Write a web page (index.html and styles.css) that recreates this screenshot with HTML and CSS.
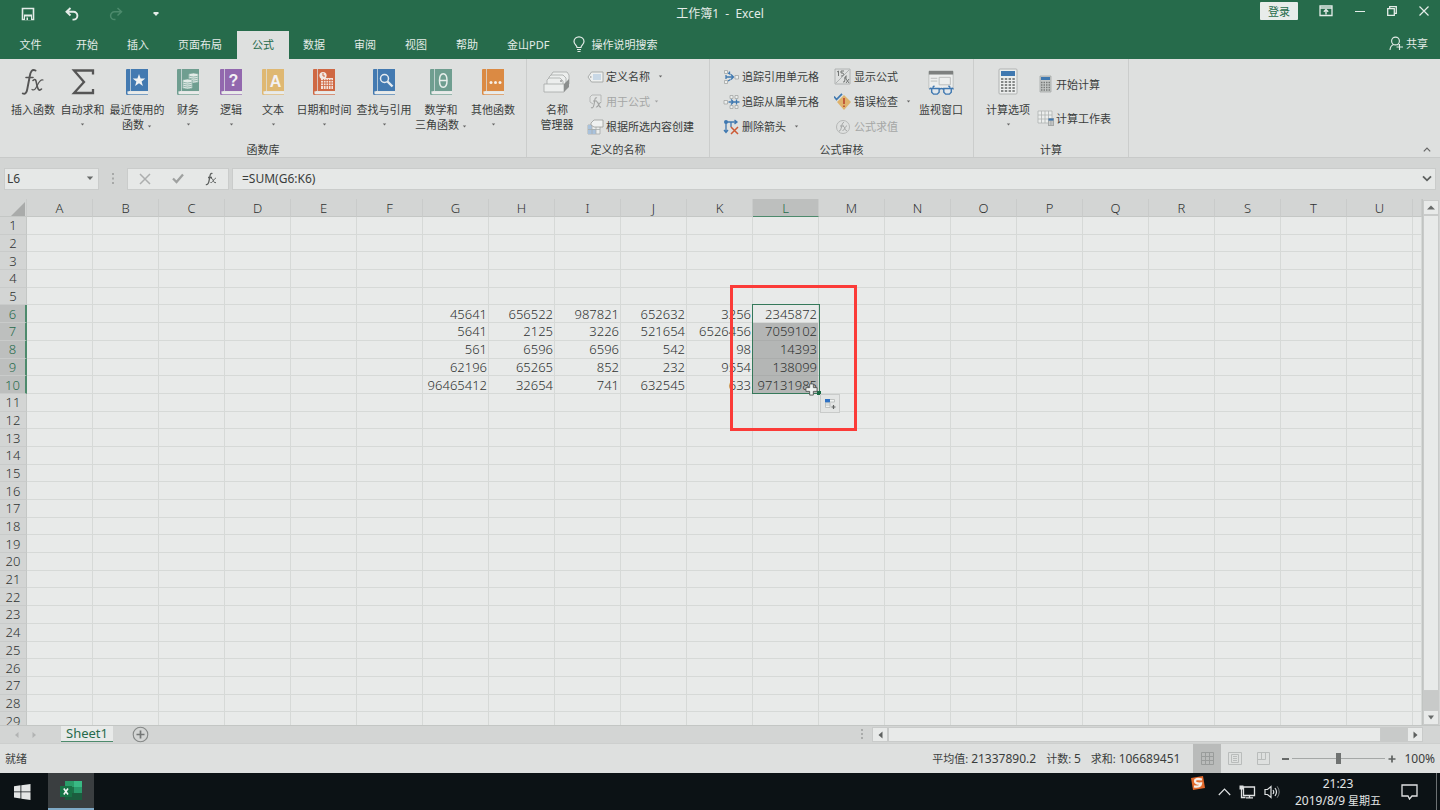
FILE: index.html
```html
<!DOCTYPE html>
<html lang="zh-CN">
<head>
<meta charset="utf-8">
<title>工作簿1 - Excel</title>
<link rel="stylesheet" href="styles.css">
</head>
<body>
<svg class="defs" aria-hidden="true">
  <symbol id="book" viewBox="0 0 24 28">
    <path d="M2 1h21v22H3.500V27H2.500Q1 27 1 25.500V2Q1 1 2 1Z" fill="currentColor"/>
    <path d="M5.500 1v22" stroke="#dfe5e6" stroke-width="1" opacity=".7"/>
    <path d="M2 23.500h21v3H2.500z" fill="#e9ebea"/>
    <path d="M2 26.500h21M2 23.500V26" stroke="currentColor" stroke-width="1" opacity=".65"/>
  </symbol>
  <symbol id="caret" viewBox="0 0 5 3"><path d="M.8 .5h3.400L2.500 2.500z" fill="#666"/></symbol>
</svg>

<header class="top">
  <div class="titlebar">
    <div class="quick">
      <button aria-label="保存"><svg width="14" height="14" viewBox="0 0 14 14"><path d="M1.500 1.500h11v11h-11z" fill="none" stroke="#e4ece8" stroke-width="1.600"/><path d="M3 7.500h8V13H3z" fill="#e4ece8"/><path d="M4 9.500h6V13H4z" fill="#266b4b"/><path d="M5.500 10.500h1.500V13H5.500z" fill="#e4ece8"/></svg></button>
      <button aria-label="撤消"><svg width="14" height="14" viewBox="0 0 14 14"><path d="M5.500 1 1.500 4.800l4 3.700M2 4.800h6.500a3.900 3.900 0 0 1 0 7.800H7.500" fill="none" stroke="#e4ece8" stroke-width="1.900"/></svg></button>
      <button aria-label="恢复"><svg width="14" height="14" viewBox="0 0 14 14"><path d="M8.500 1l4 3.800-4 3.700M12 4.800H5.500a3.900 3.900 0 0 0 0 7.800h1" fill="none" stroke="#4c8a6c" stroke-width="1.500"/></svg></button>
      <button aria-label="自定义快速访问工具栏"><svg width="6" height="6" viewBox="0 0 6 6"><path d="M.5 1h5v1.200L3 5 .5 2.200z" fill="#e4ece8"/></svg></button>
    </div>
    <h1 class="title">工作簿1&nbsp; -&nbsp; Excel</h1>
    <div class="window-tools">
      <button class="login">登录</button>
      <button aria-label="功能区显示选项"><svg width="14" height="12" viewBox="0 0 14 12"><path d="M1 1h12v9.500H1zM1 3h12" fill="none" stroke="#e4ece8" stroke-width="1.300"/><path d="M7 9.500V5M4.800 6.800 7 4.600l2.200 2.200" fill="none" stroke="#e4ece8" stroke-width="1.400"/></svg></button>
      <button aria-label="最小化"><svg width="10" height="12" viewBox="0 0 10 12"><path d="M0 6.500h10" stroke="#e4ece8"/></svg></button>
      <button aria-label="还原"><svg width="10" height="10" viewBox="0 0 10 10"><path d="M.7 2.700h6.600v6.600H.7zM2.700 2.500V.7h6.600v6.600H7.500" fill="none" stroke="#e4ece8" stroke-width="1.300"/></svg></button>
      <button aria-label="关闭"><svg width="10" height="10" viewBox="0 0 10 10"><path d="M.5 .5l9 9M9.500 .5l-9 9" stroke="#e4ece8" stroke-width="1.200"/></svg></button>
    </div>
  </div>
  <nav class="tabs">
    <button class="tab file">文件</button><button class="tab">开始</button><button class="tab">插入</button><button class="tab">页面布局</button><button class="tab active">公式</button><button class="tab">数据</button><button class="tab">审阅</button><button class="tab">视图</button><button class="tab">帮助</button><button class="tab">金山PDF</button>
    <button class="tell"><svg width="12" height="17" viewBox="0 0 12 17"><path d="M4 11.500C4 9 1 8.500 1 5.500a5 4.700 0 0 1 10 0C11 8.500 8 9 8 11.500zM4 13.500h4M4.500 15.500h3" fill="none" stroke="#e4ece8" stroke-width="1.200"/></svg>操作说明搜索</button>
    <button class="share"><svg width="14" height="15" viewBox="0 0 14 15"><circle cx="6.500" cy="5" r="3.900" fill="none" stroke="#e4ece8" stroke-width="1.100"/><path d="M1 14c.2-3 1.700-4.800 3.500-5.500M8.500 8.500l1 .6M10.500 8v6M7.500 11h6.500" fill="none" stroke="#e4ece8" stroke-width="1.100"/></svg>共享</button>
  </nav>
</header>

<section class="ribbon">
  <div class="group library">
    <div class="tools">
      <button class="big w48"><svg width="24" height="28" viewBox="0 0 24 28"><g fill="none" stroke="#555" stroke-linecap="round"><path d="M14.500 2.500C11 .5 9.500 4 8.800 8L6.300 21c-.6 4-2.300 5.500-4.500 4.500" stroke-width="1.900"/><path d="M5 9.500h7M12 12.500c3-3 3 1 4 5s2 6 4.500 3.500" stroke-width="1.600"/><path d="M22 12c-3-1-5 4-6 6s-2.500 5-5 3.500" stroke-width="1.200"/></g></svg><span>插入函数</span></button>
      <button class="big w51"><svg width="24" height="28" viewBox="0 0 24 28"><path d="M22 6.500V2.500H3l10 11.500L3 25h19v-4" fill="none" stroke="#555" stroke-width="2.300"/></svg><span>自动求和</span><i><svg class="caret"><use href="#caret"/></svg></i></button>
      <button class="big w58"><svg class="blue" width="24" height="28" viewBox="0 0 24 28"><use href="#book"/><path d="m14 6 1.600 4.400 4.700.1-3.700 2.900 1.300 4.600-3.900-2.700-3.900 2.700 1.300-4.600-3.700-2.900 4.700-.1z" fill="#f1f3f3"/></svg><span>最近使用的<br>函数 <svg class="caret"><use href="#caret"/></svg></span></button>
      <button class="big w44"><svg class="teal" width="24" height="28" viewBox="0 0 24 28"><use href="#book"/><g fill="#e3ebe7" stroke="#6f9e90" stroke-width=".7"><ellipse cx="17.500" cy="13" rx="5" ry="2"/><ellipse cx="17.500" cy="11" rx="5" ry="2"/><ellipse cx="17.500" cy="9" rx="5" ry="2"/><ellipse cx="17.500" cy="7" rx="5" ry="2"/><ellipse cx="11.500" cy="19" rx="5" ry="2"/><ellipse cx="11.500" cy="17" rx="5" ry="2"/><ellipse cx="11.500" cy="15" rx="5" ry="2"/><ellipse cx="11.500" cy="13" rx="5" ry="2"/></g></svg><span>财务</span><i><svg class="caret"><use href="#caret"/></svg></i></button>
      <button class="big w42"><svg class="purple" width="24" height="28" viewBox="0 0 24 28"><use href="#book"/><text x="14.500" y="18" class="glyph">?</text></svg><span>逻辑</span><i><svg class="caret"><use href="#caret"/></svg></i></button>
      <button class="big w42"><svg class="yellow" width="24" height="28" viewBox="0 0 24 28"><use href="#book"/><text x="14.500" y="19" class="glyph">A</text></svg><span>文本</span><i><svg class="caret"><use href="#caret"/></svg></i></button>
      <button class="big w60"><svg class="red" width="24" height="28" viewBox="0 0 24 28"><use href="#book"/><path d="M9 10h12v11H9z" fill="#f3e2db"/><path d="M9 12.500h12M9 15h12M9 17.500h12M11.500 11v10M14 11v10M16.500 11v10M19 11v10" stroke="#cf6843" stroke-width=".8"/><circle cx="11" cy="7.500" r="3.600" fill="#f1e9e5"/><path d="M11 5v3h2" fill="none" stroke="#cf6843"/></svg><span>日期和时间</span><i><svg class="caret"><use href="#caret"/></svg></i></button>
      <button class="big w60"><svg class="blue" width="24" height="28" viewBox="0 0 24 28"><use href="#book"/><circle cx="12.500" cy="10.500" r="4" fill="none" stroke="#e5ebf0" stroke-width="1.500"/><path d="m15.500 13.500 5 5" stroke="#e5ebf0" stroke-width="2.400"/></svg><span>查找与引用</span><i><svg class="caret"><use href="#caret"/></svg></i></button>
      <button class="big w54"><svg class="teal" width="24" height="28" viewBox="0 0 24 28"><use href="#book"/><path d="M10.500 12.500c0-9 7.500-9 7.500 0s-7.500 9-7.500 0zh7.500" fill="none" stroke="#e9efec" stroke-width="1.500"/></svg><span>数学和<br>三角函数 <svg class="caret"><use href="#caret"/></svg></span></button>
      <button class="big w50"><svg class="orange" width="24" height="28" viewBox="0 0 24 28"><use href="#book"/><g fill="#f7efe6"><circle cx="10" cy="14.500" r="1.500"/><circle cx="14.500" cy="14.500" r="1.500"/><circle cx="19" cy="14.500" r="1.500"/></g></svg><span>其他函数</span><i><svg class="caret"><use href="#caret"/></svg></i></button>
    </div>
    <h2>函数库</h2>
  </div>

  <div class="group names">
    <div class="tools">
      <button class="big w60"><svg width="28" height="28" viewBox="0 0 28 28"><g fill="#eceeed" stroke="#a4a7a6" stroke-width=".8"><path d="M8 17V7l2-3h14l2 3v9z"/><path d="M6 18V9l2-2h12l3 3v8z"/><path d="M4 19v-7l2-2h11l3 3v6z"/><path d="M1 16h20v8H1z"/></g><path d="m21 16 5-5v8l-5 5z" fill="#8b8e8d"/><circle cx="18" cy="13" r="1" fill="#999"/></svg><span>名称<br>管理器</span></button>
      <div class="rows">
        <button><svg width="17" height="16" viewBox="0 0 17 16"><path d="M1 8l3.500-5H16v10H4.500z" fill="#eef0ef" stroke="#a2a5a4" stroke-width=".9"/><path d="M6 6h8M6 8h8M6 10h8" stroke="#a3c0dc"/><circle cx="3.800" cy="8" r=".7" fill="#888"/></svg>定义名称 <svg class="caret far"><use href="#caret"/></svg></button>
        <button class="off"><svg width="17" height="16" viewBox="0 0 17 16"><path d="M3 8V3l2-2h9v6M3 8l3 2" fill="#e2e4e3" stroke="#b5b7b6"/><path d="M10 4C8 3 8 5 7.500 8S6.500 15 4 13.500M6 7h4M9.500 8c2-1 2 6 4.500 5M14.500 8c-2-1-3 6-5.500 5" fill="none" stroke="#a1a3a2" stroke-width="1.100"/></svg>用于公式 <svg class="caret"><use href="#caret"/></svg></button>
        <button><svg width="17" height="16" viewBox="0 0 17 16"><path d="M1 6h12v9H1z" fill="#eceeed" stroke="#a5a8a7" stroke-width=".8"/><path d="M1 10h8v5H1zM5 6v4H1V6z" fill="#a9c2dc"/><path d="M1 10.500h12M5 6v9M9 6v9" stroke="#aaadac" stroke-width=".8"/><path d="m4 4 3-3h9v7H7L4 6z" fill="#f0f2f1" stroke="#999c9b" stroke-width=".8"/></svg>根据所选内容创建</button>
      </div>
    </div>
    <h2>定义的名称</h2>
  </div>

  <div class="group audit">
    <div class="tools">
      <div class="rows trace">
        <button><svg width="17" height="16" viewBox="0 0 17 16"><path d="M1.500 1.500h3v3h-3zM1.500 11.500h3v3h-3zM12 6.500h3.500v3.500H12z" fill="#eceeed" stroke="#a3a6a5" stroke-width=".8"/><path d="M3 8h7M8 5.500 10.500 8 8 10.500M3 6v4M6.500 2.500v3M5 4l2.500 1.500M5 12l2.500-1.500" fill="none" stroke="#3f78b0" stroke-width="1.300"/></svg>追踪引用单元格</button>
        <button><svg width="17" height="16" viewBox="0 0 17 16"><path d="M1 6.500h3.500V10H1zM7 1.500h3v3H7zM7 11.500h3v3H7zM12 1.500h3v3h-3zM12 11.500h3v3h-3z" fill="#eceeed" stroke="#a3a6a5" stroke-width=".8"/><path d="M5.500 8H10M8 5.500 10.500 8 8 10.500M13.500 5.500v5M11 8h5.500" fill="none" stroke="#3f78b0" stroke-width="1.300"/></svg>追踪从属单元格</button>
        <button><svg width="17" height="16" viewBox="0 0 17 16"><path d="M3 3v10M3 3h11M1 11l2 2.500L5 11M11.500 1 14 3l-2.500 2M8 3v5" fill="none" stroke="#3f78b0" stroke-width="1.300"/><circle cx="3" cy="3" r="2" fill="#3f78b0"/><path d="m8 8 7 7M15 8l-7 7" stroke="#cc5a36" stroke-width="1.500"/></svg>删除箭头 <svg class="caret far"><use href="#caret"/></svg></button>
      </div>
      <div class="rows check">
        <button><svg width="18" height="17" viewBox="0 0 18 17"><path d="M1 1h15v15H1zM2 15 15 2" fill="none" stroke="#a5a8a7" stroke-width=".8"/><path d="M3 4l1.500-1v5M10 3H7v2h2q1.500 1.500-.5 3H7M13 8q-2-1-2 3t-2 3M10 10h3M12 11l3 4M15 11l-3 4" fill="none" stroke="#686b6a" stroke-width=".9"/></svg>显示公式</button>
        <button><svg width="18" height="18" viewBox="0 0 18 18"><path d="m10 2 7 7-7 8-7-8z" fill="#dfb36c"/><path d="M10 5v6M10 12.500v1.500" stroke="#bd4c32" stroke-width="1.700"/><path d="m0 3.500 2.500 3L8 .8" fill="none" stroke="#3f78b0" stroke-width="1.700"/></svg>错误检查 <svg class="caret far"><use href="#caret"/></svg></button>
        <button class="off"><svg width="18" height="16" viewBox="0 0 18 16"><circle cx="9" cy="8" r="6.500" fill="none" stroke="#b5b7b6"/><path d="M10 3.500C7 3 8 12.500 5 12M6 7h4M9 7.500c2-1 1.500 5 4 4M13 7c-2-.5-2.500 5-4.500 4.500" fill="none" stroke="#a2a4a3"/></svg>公式求值</button>
      </div>
      <button class="big w50"><svg width="28" height="30" viewBox="0 0 28 30"><path d="M1 4h26v18H1z" fill="#eceeed" stroke="#b3b6b5" stroke-width=".8"/><path d="M1 3h26v4H1z" fill="#7d807f"/><path d="M3 11h7M3 14h7M12 10h12v8H12z" fill="none" stroke="#b8bbba"/><path d="M4 22h8v4l-2 2H6l-2-2zM17 22h8v4l-2 2h-4l-2-2zM12 23q2.500-2 5 0M4 22q-2-1-2 1M25 22q2-1 2 1M5 21l2-2M24 21l-2-2" fill="#e2e7eb" stroke="#3f78b0" stroke-width="1.500"/></svg><span>监视窗口</span></button>
    </div>
    <h2>公式审核</h2>
  </div>

  <div class="group calc">
    <div class="tools">
      <button class="big w50"><svg width="20" height="28" viewBox="0 0 20 28"><rect x="1" y="1" width="18" height="25" rx="1" fill="#eceeed" stroke="#b0b3b2"/><path d="M3 3h14v5H3z" fill="#3f78b0"/><g stroke="#626564" stroke-width="1.600" stroke-dasharray="2.400 1.400"><path d="M3 11h14M3 14h14M3 17h14M3 20h14M3 23h14"/></g></svg><span>计算选项</span><i><svg class="caret"><use href="#caret"/></svg></i></button>
      <div class="rows two">
        <button><svg width="17" height="18" viewBox="0 0 17 18"><path d="M3 1h11v16H3z" fill="#c5c8c7" stroke="#a5a8a7" stroke-width=".8"/><path d="M4 2h9v3H4z" fill="#3f78b0"/><g stroke="#777a79" stroke-width="1.300" stroke-dasharray="1.500 1"><path d="M4 7.500h9M4 10h9M4 12.500h9M4 15h9"/></g></svg>开始计算</button>
        <button><svg width="17" height="16" viewBox="0 0 17 16"><path d="M1 1h14v12H1zM1 5h14M1 9h14M4.500 1v12M8 1v12M11.500 1v12" fill="#eceeed" stroke="#afb2b1" stroke-width=".8"/><path d="M11 8h6v8h-6z" fill="#a5a8a7"/><path d="M11.500 8.500h5v2h-5z" fill="#3f78b0"/><path d="M12 12h4M12 14h4" stroke="#eceeed" stroke-dasharray="1 .6"/></svg>计算工作表</button>
      </div>
    </div>
    <h2>计算</h2>
  </div>
  <button class="collapse" aria-label="折叠功能区"><svg width="8" height="5" viewBox="0 0 8 5"><path d="M.8 4.300 4 1l3.200 3.300" fill="none" stroke="#666" stroke-width="1.200"/></svg></button>
</section>

<section class="formula-bar">
  <div class="name-box"><input type="text" value="L6" aria-label="名称框"><svg width="8" height="5" viewBox="0 0 8 5"><path d="M.8 .5h6.400L4 4z" fill="#686b6a"/></svg></div>
  <svg width="4" height="13" viewBox="0 0 4 13"><path d="M1 1h2v2H1zM1 5.500h2v2H1zM1 10h2v2H1z" fill="#a7a9a8"/></svg>
  <div class="fx-buttons">
    <button aria-label="取消"><svg width="12" height="12" viewBox="0 0 12 12"><path d="m1 1 10 10M11 1 1 11" stroke="#acaeae" stroke-width="1.500"/></svg></button>
    <button aria-label="输入"><svg width="12" height="11" viewBox="0 0 12 11"><path d="m1 5.500 3.500 3.500L11 1.500" fill="none" stroke="#9fa1a0" stroke-width="2.300"/></svg></button>
    <button aria-label="插入函数"><svg width="12" height="14" viewBox="0 0 12 14"><path d="M7.500 1.500C5 .5 5 4 4.500 6.500S3.500 13.500.8 12.500M3 5.500h4" fill="none" stroke="#5d605f" stroke-width="1.300"/><path d="M6 6.500c2.500-1 2 5.500 5 4M11 6.300c-2-.5-3 5-5.500 4.200" fill="none" stroke="#5d605f"/></svg></button>
  </div>
  <div class="formula"><input type="text" value="=SUM(G6:K6)" aria-label="编辑栏"><svg width="10" height="7" viewBox="0 0 10 7"><path d="m1 1.300 4 4 4-4" fill="none" stroke="#5d605f" stroke-width="1.800"/></svg></div>
</section>

<main class="workspace">
  <div class="sheet">
    <table>
      <colgroup id="cols"></colgroup>
      <thead id="head"></thead>
      <tbody id="cells"></tbody>
    </table>
    <div class="selection"></div>
    <svg class="pointer" viewBox="0 0 14 14"><path d="M5 1h4v4h4v4H9v4H5V9H1V5h4z" fill="#f0f2f1" stroke="#4a4d4c" stroke-width=".9"/></svg>
    <button class="fill-options" aria-label="自动填充选项"><svg width="12" height="12" viewBox="0 0 12 12"><path d="M1 1h5v3.500H1z" fill="#2f72c4"/><path d="M6 1.500h4.500V4H6M1.500 5H6v4.500H1.500zM1.500 7H6" fill="#f1f3f2" stroke="#b4b7b6" stroke-width=".8"/><path d="M9.500 7v4M7.500 9h4" stroke="#626564" stroke-width="1.200"/></svg></button>
    <div class="highlight"></div>
  </div>
  <div class="vscroll">
    <button aria-label="向上滚动"><svg width="8" height="5" viewBox="0 0 8 5"><path d="M0 4.500h8L4 .5z" fill="#686b6a"/></svg></button>
    <div class="thumb"></div><div class="track"></div>
    <button aria-label="向下滚动"><svg width="8" height="5" viewBox="0 0 8 5"><path d="M1 .5h6L4 4.500z" fill="#686b6a"/></svg></button>
  </div>
</main>

<div class="sheet-tabs">
  <button class="nav" aria-label="上一张"><svg width="5" height="8" viewBox="0 0 5 8"><path d="M4.500 1v6L1 4z" fill="#b2b4b3"/></svg></button>
  <button class="nav" aria-label="下一张"><svg width="5" height="8" viewBox="0 0 5 8"><path d="M.5 1v6L4 4z" fill="#b2b4b3"/></svg></button>
  <button class="sheet-name">Sheet1</button>
  <button class="add" aria-label="新工作表"><svg width="17" height="17" viewBox="0 0 17 17"><circle cx="8.500" cy="8.500" r="7.300" fill="none" stroke="#858887" stroke-width="1.100"/><path d="M8.500 4.500v8M4.500 8.500h8" stroke="#747776" stroke-width="1.700"/></svg></button>
  <div class="hscroll">
    <svg width="4" height="11" viewBox="0 0 4 11"><path d="M1 0h2v2H1zM1 4h2v2H1zM1 8h2v2H1z" fill="#aaacab"/></svg>
    <button aria-label="向左滚动"><svg width="5" height="8" viewBox="0 0 5 8"><path d="M4.500 .5v7L.5 4z" fill="#5d605f"/></svg></button>
    <div class="thumb"></div><div class="track"></div>
    <button aria-label="向右滚动"><svg width="5" height="8" viewBox="0 0 5 8"><path d="M.5 .5v7l4-3.500z" fill="#5d605f"/></svg></button>
  </div>
</div>

<footer class="status">
  <span class="ready">就绪</span>
  <div class="stats"><span>平均值: <b>21337890.2</b></span><span>计数: <b>5</b></span><span>求和: <b>106689451</b></span></div>
  <button class="view on" aria-label="普通"><svg width="13" height="13" viewBox="0 0 13 13"><path d="M.5 .5h12v12H.5zM4.500 .5v12M8.500 .5v12M.5 4.500h12M.5 8.500h12" fill="none" stroke="#999c9b"/></svg></button>
  <button class="view" aria-label="页面布局"><svg width="14" height="13" viewBox="0 0 14 13"><path d="M.5 .5h13v12H.5zM3.500 2.500h7v8h-7zM5 4.500h4M5 6.500h4M5 8.500h4" fill="none" stroke="#b9bcbb"/></svg></button>
  <button class="view" aria-label="分页预览"><svg width="13" height="13" viewBox="0 0 13 13"><path d="M.5 .5h12v12H.5zM.5 7.500h8v-7M4.500 .5v7" fill="none" stroke="#b9bcbb"/></svg></button>
  <div class="zoom">
    <button aria-label="缩小"><svg width="7" height="8" viewBox="0 0 7 8"><path d="M0 4h7" stroke="#5f6261" stroke-width="1.900"/></svg></button>
    <input type="range" min="0" max="100" value="50" aria-label="显示比例">
    <button aria-label="放大"><svg width="8" height="8" viewBox="0 0 8 8"><path d="M.5 4h7M4 .5v7" stroke="#5f6261" stroke-width="1.700"/></svg></button>
    <span>100%</span>
  </div>
</footer>

<div class="taskbar">
  <button class="start" aria-label="开始"><svg width="17" height="16" viewBox="0 0 17 16"><path d="M0 2.300 6.500 1.300v6.200H0zM7.300 1.200 16.500 0v7.500H7.300zM0 8.300h6.500v6.200L0 13.600zM7.300 8.300h9.200V16l-9.200-1.300z" fill="#e3e5e5"/></svg></button>
  <button class="app" aria-label="Excel"><svg width="23" height="21" viewBox="0 0 23 21"><path d="M5 1h9v6H5z" fill="#2a9d69"/><path d="M14 1h8v6h-8z" fill="#39b984"/><path d="M5 7h9v6H5z" fill="#1d7048"/><path d="M14 7h8v6h-8z" fill="#29996a"/><path d="M5 13h17v7H5z" fill="#1b5d3e"/><path d="M0 6h12v11H0z" fill="#177245"/><path d="m3.800 8.500 4.200 6M8 8.500l-4.200 6" stroke="#f1f5f3" stroke-width="1.600"/></svg></button>
  <div class="tray">
    <svg class="ime" width="16" height="16" viewBox="0 0 16 16"><path d="M1 3 13 1l2 12-12 2z" fill="#e36a2c"/><path d="M12 4.500Q5 3 5 6t6 2.500Q10.500 12.500 4 11.300" fill="none" stroke="#f6efea" stroke-width="2.300"/></svg>
    <svg width="13" height="8" viewBox="0 0 13 8"><path d="m.8 7 5.700-5.800L12.200 7" fill="none" stroke="#dfe1e2" stroke-width="1.200"/></svg>
    <svg width="17" height="14" viewBox="0 0 17 14"><path d="M4.500 2h11v8.500h-11zM7 12.800h7M10.500 10.500v2M2.500 4v8.500h4" fill="none" stroke="#dfe1e2" stroke-width="1.300"/><path d="M.5 .5h4v4h-4z" fill="#dfe1e2"/></svg>
    <svg width="16" height="14" viewBox="0 0 16 14"><path d="M1 4.500h2.500L7 1.500v11L3.500 9.500H1zM9 5q1.500 2 0 4M11 3q3 4 0 8" fill="none" stroke="#dfe1e2" stroke-width="1.200"/><path d="M13.200 1.300q4 5.700 0 11.400" fill="none" stroke="#7c8082"/></svg>
    <div class="clock"><time>21:23</time><span><b>2019/8/9</b> 星期五</span></div>
    <svg width="17" height="16" viewBox="0 0 17 16"><path d="M1 1h15v11h-5l-2.500 3L7 12H1z" fill="none" stroke="#dfe1e2" stroke-width="1.300"/></svg>
    <span class="desktop"></span>
  </div>
</div>
<script src="sheet.js"></script>
</body>
</html>
```

FILE: styles.css
```css
* { box-sizing: border-box; }
html, body { height: 100%; margin: 0; }
body {
  display: flex;
  flex-direction: column;
  overflow: hidden;
  background: #d3d5d4;
  color: #3a3d3c;
  font: 11px/15px "Noto Sans", "Noto Sans CJK SC", sans-serif;
}
button, input {
  margin: 0;
  padding: 0;
  border: 0;
  background: none;
  color: inherit;
  font: inherit;
}
svg { display: block; flex: none; }
h1, h2 { margin: 0; font: inherit; }
b { font-weight: 400; font-size: 12px; }
.defs { position: absolute; width: 0; height: 0; }

/* title bar and tabs */
.top { background: #266b4b; color: #e4ece8; }
.titlebar {
  display: grid;
  grid-template-columns: 1fr auto 1fr;
  align-items: center;
  height: 27px;
}
.quick { display: flex; align-items: center; gap: 30px; padding-left: 21px; }
.quick button { display: flex; width: 14px; justify-content: center; }
.quick button:last-child { width: 6px; }
.title { font-size: 12px; }
.window-tools {
  display: flex;
  justify-content: flex-end;
  align-items: center;
  gap: 22px;
  height: 22px;
  padding-right: 11px;
  align-self: start;
}
.login {
  width: 38px;
  height: 18px;
  margin-right: -1px;
  border-radius: 1px;
  background: #e8ecea;
  color: #266b4b;
}
.tabs { display: flex; align-items: stretch; height: 32px; padding-top: 4px; }
.tab { padding: 0 15px 2px 14px; }
.tab.file { width: 62px; }
.tab.active { padding: 0 15px 2px; background: #dee0df; color: #266b4b; }
.tell { display: flex; align-items: center; gap: 6px; padding: 0 0 1px 9px; }
.share { display: flex; align-items: center; gap: 3px; margin-left: auto; padding: 0 12px 4px 0; }

/* ribbon */
.ribbon {
  position: relative;
  display: flex;
  height: 99px;
  background: #dee0df;
  border-bottom: 1px solid #c8cac9;
}
.group { display: flex; flex-direction: column; border-right: 1px solid #cbcdcc; }
.group h2 { text-align: center; }
.tools { display: flex; height: 84px; }
.big {
  display: flex;
  flex-direction: column;
  align-items: center;
  padding-top: 9px;
  white-space: nowrap;
}
.big > svg { height: 28px; margin-bottom: 6px; }
.big span { text-align: center; }
.big i { display: flex; height: 15px; align-items: center; }
.caret { display: inline-block; width: 5px; height: 3px; vertical-align: middle; }
.w42 { width: 42px; }
.w44 { width: 44px; }
.w48 { width: 48px; }
.w50 { width: 50px; }
.w51 { width: 51px; }
.w54 { width: 54px; }
.w58 { width: 58px; }
.w60 { width: 60px; }
.blue { color: #437ab1; }
.teal { color: #6f9e90; }
.purple { color: #9268ae; }
.yellow { color: #dfb872; }
.red { color: #cf6843; }
.orange { color: #db8a43; }
.glyph {
  fill: #f3f1f4;
  font: 700 16px "Liberation Sans", sans-serif;
  text-anchor: middle;
}
.rows { display: flex; flex-direction: column; padding-top: 5px; }
.rows button {
  display: flex;
  align-items: center;
  gap: 2px;
  height: 25px;
  white-space: nowrap;
}
.rows .caret { margin-left: 2px; }
.rows .caret.far { margin-left: 6px; }
.rows.two { padding: 8px 0 0 4px; }
.rows.two button { height: 34px; }
.rows .off { color: #a5a7a6; }
.off .caret { opacity: .5; }
.library .tools { padding: 0 8px 0 9px; }
.names .tools { padding-right: 15px; }
.audit .tools { padding: 0 7px 0 13px; }
.trace { width: 111px; }
.check { width: 82px; }
.calc .tools { padding: 0 17px 0 9px; }
.collapse { position: absolute; right: 9px; bottom: 5px; }

/* formula bar */
.formula-bar { display: flex; align-items: center; height: 41px; padding: 0 4px; }
.name-box, .fx-buttons, .formula {
  display: flex;
  align-items: center;
  height: 22px;
  background: #e6e8e7;
  border: 1px solid #cacccb;
}
.name-box { width: 95px; margin-right: 12px; padding: 0 4px 0 2px; font-size: 12px; }
.name-box input { flex: 1; min-width: 0; }
.fx-buttons { width: 102px; margin: 0 3px 0 12px; justify-content: space-around; }
.formula { flex: 1; padding: 0 3px 0 9px; font-size: 12px; }
.formula input { flex: 1; min-width: 0; }

/* worksheet */
.workspace { display: flex; flex: 1; min-height: 0; }
.sheet { position: relative; flex: 1; min-width: 0; overflow: hidden; background: #e8eae9; }
.sheet table {
  width: 100%;
  height: 531px;
  table-layout: fixed;
  border-collapse: separate;
  border-spacing: 0;
  font-size: 13px;
  font-weight: 300;
  line-height: 16px;
  color: #2f3231;
}
.sheet col { width: 66px; }
.sheet .row-col { width: 27px; }
.sheet .rest { width: auto; }
.sheet th, .sheet td {
  padding: 0;
  border: solid #d6d9d7;
  border-width: 0 1px 1px 0;
  overflow: hidden;
}
.sheet th { background: #d3d5d4; border-color: #c4c7c5; font-weight: 300; }
.sheet thead tr { height: 18px; }
.sheet thead th { border-right-color: #c9cbca; }
.sheet tbody th { border-bottom-color: #c9cbca; }
.sheet td { padding-right: 1px; text-align: right; }
.sheet thead .picked { background: #bdbfbe; border-bottom-color: #4d8a6c; color: #266b4b; }
.sheet tbody .picked { background: #bdbfbe; border-right: 2px solid #4d8a6c; color: #266b4b; }
.sheet .shaded { background: #b4b6b5; border-bottom-color: #abadac; }
.corner svg { margin: 2px 1px 0 auto; }
.selection {
  position: absolute;
  left: 752px;
  top: 105px;
  width: 68px;
  height: 90px;
  border: 1px solid #35795a;
}
.selection::after {
  content: "";
  position: absolute;
  right: -2px;
  bottom: -2px;
  width: 4px;
  height: 4px;
  background: #1c6b45;
}
.pointer { position: absolute; left: 805px; top: 184px; width: 13px; height: 13px; }
.fill-options {
  position: absolute;
  left: 820px;
  top: 195px;
  display: grid;
  place-items: center;
  width: 20px;
  height: 19px;
  border: 1px solid #c9cbca;
  background: #e3e5e4;
}
.highlight {
  position: absolute;
  left: 730px;
  top: 86px;
  width: 127px;
  height: 146px;
  border: 3px solid #fb3b38;
}
.vscroll { display: flex; flex-direction: column; width: 18px; padding: 1px 1px 0 0; border-left: 1px solid #c1c4c2; }
.vscroll button, .hscroll button {
  display: grid;
  place-items: center;
  width: 16px;
  height: 15px;
  background: #e8eae9;
  border: 1px solid #c9cbca;
}
.thumb { background: #e8eae9; border: 1px solid #c9cbca; }
.vscroll .thumb { flex: 1; }
.track { background: #c8cac9; }
.vscroll .track { height: 19px; }

/* sheet tabs */
.sheet-tabs {
  display: flex;
  align-items: center;
  height: 18px;
  border-top: 1px solid #c3c6c4;
}
.nav { width: 18px; display: grid; place-items: center; }
.nav:first-child { margin-left: 7px; }
.sheet-name {
  width: 52px;
  height: 16px;
  margin: 0 19px 0 18px;
  align-self: start;
  background: #e8eae9;
  border-bottom: 1px solid #4d8a6c;
  color: #266b4b;
  font-size: 13px;
  line-height: 15px;
}
.hscroll { display: flex; align-items: center; width: 580px; margin-left: auto; padding-right: 17px; }
.hscroll > svg { margin-right: 8px; }
.hscroll .thumb { flex: 1; height: 15px; }
.hscroll .track { width: 26px; height: 15px; }

/* status bar */
.status { display: flex; align-items: center; height: 30px; background: #dee0df; border-top: 1px solid #cdcfce; }
.ready { padding-left: 5px; }
.stats { display: flex; gap: 10px; margin-left: auto; padding-right: 13px; }
.view { display: grid; place-items: center; width: 28px; height: 100%; }
.view.on { background: #b9bbba; }
.zoom { display: flex; align-items: center; gap: 3px; padding: 0 5px 0 5px; font-size: 12px; }
.zoom span { margin-left: 5px; }
.zoom input { appearance: none; width: 93px; height: 12px; }
.zoom input::-webkit-slider-runnable-track { height: 1px; background: #a5a8a7; }
.zoom input::-webkit-slider-thumb { appearance: none; width: 5px; height: 11px; margin-top: -5px; background: #6f7271; }

/* taskbar */
.taskbar { display: flex; height: 37px; background: #0c1215; color: #e3e5e5; }
.start { width: 48px; padding-left: 14px; }
.app {
  display: grid;
  place-items: center;
  width: 46px;
  background: #3a3e40;
  border-bottom: 2px solid #7fa9c6;
}
.tray { display: flex; align-items: center; gap: 8px; margin-left: auto; padding-right: 3px; }
.ime { align-self: start; margin: 2px 4px 0 0; }
.clock {
  display: flex;
  flex-direction: column;
  align-items: center;
  margin: 0 12px 0 7px;
  font-size: 11px;
  line-height: 17px;
}
.clock time { font-size: 12px; }
.desktop { align-self: stretch; width: 1px; margin-left: 10px; background: #6c7072; }
```

FILE: sheet.js
```js
const letters = "ABCDEFGHIJKLMNOPQRSTU".split("");
const data = {
  6: { G: 45641, H: 656522, I: 987821, J: 652632, K: 3256, L: 2345872 },
  7: { G: 5641, H: 2125, I: 3226, J: 521654, K: 6526456, L: 7059102 },
  8: { G: 561, H: 6596, I: 6596, J: 542, K: 98, L: 14393 },
  9: { G: 62196, H: 65265, I: 852, J: 232, K: 9554, L: 138099 },
  10: { G: 96465412, H: 32654, I: 741, J: 632545, K: 633, L: 97131985 }
};

document.getElementById("cols").innerHTML =
  '<col class="row-col">' + "<col>".repeat(letters.length) + '<col class="rest">';

document.getElementById("head").innerHTML =
  '<tr><th class="corner"><svg width="14" height="14" viewBox="0 0 14 14"><path d="M14 0v14H0z" fill="#a9abaa"/></svg></th>' +
  letters.map(l => `<th${l === "L" ? ' class="picked"' : ""}>${l}</th>`).join("") +
  "<th></th></tr>";

let rows = "";
for (let r = 1; r <= 29; r++) {
  rows += `<tr><th${data[r] ? ' class="picked"' : ""}>${r}</th>`;
  for (const l of letters) {
    const value = data[r] && data[r][l];
    const shaded = l === "L" && r > 6 && r < 11;
    rows += `<td${shaded ? ' class="shaded"' : ""}>${value === undefined ? "" : value}</td>`;
  }
  rows += "<td></td></tr>";
}
document.getElementById("cells").innerHTML = rows;
```
